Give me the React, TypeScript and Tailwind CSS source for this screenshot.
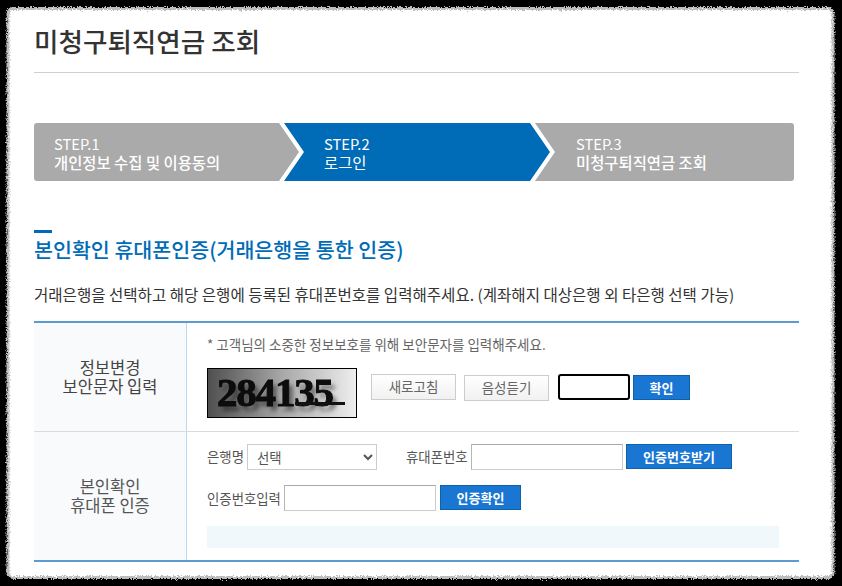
import React from "react";

const font = { fontFamily: '"Noto Sans CJK KR", "Noto Sans", sans-serif' };

function RoughEdge() {
  return (
    <svg className="absolute left-0 top-0 pointer-events-none" width="842" height="586">
      <defs>
        <filter id="rough" x="-2%" y="-2%" width="104%" height="104%">
          <feTurbulence type="fractalNoise" baseFrequency="0.8" numOctaves="2" seed="4" />
          <feDisplacementMap in="SourceGraphic" scale="5" xChannelSelector="R" yChannelSelector="G" />
        </filter>
      </defs>
      <rect x="8" y="8.5" width="825" height="569" rx="5" fill="none" stroke="#bdbdbd" strokeWidth="3" filter="url(#rough)" />
    </svg>
  );
}

function Btn({ w, children }: { w: string; children: React.ReactNode }) {
  return (
    <button className={`${w} h-[25px] bg-[#1976d2] border border-[#0f62a8] text-white text-[13px] font-bold leading-none`}>
      {children}
    </button>
  );
}

function GrayBtn({ children }: { children: React.ReactNode }) {
  return (
    <button className="w-[85px] h-[26px] border border-[#cccccc] bg-gradient-to-b from-white to-[#f1f1f1] text-[#666] text-[13.5px] leading-none">
      {children}
    </button>
  );
}

const inputCls = "h-[26px] border border-[#cccccc] border-t-[#a9a9a9] border-l-[#b5b5b5] bg-white";

export default function App() {
  return (
    <div className="relative w-[842px] h-[586px] bg-black p-2 overflow-hidden" style={font}>
      <div className="h-[570px] w-[825px] bg-white rounded-[5px] pl-[26px] overflow-hidden">
        <div className="w-[765px]">
          <div className="h-[65px] border-b border-[#d0d0d0] pt-[14px]">
            <h1 className="text-[26.6px] leading-[38px] font-medium text-[#333]">미청구퇴직연금 조회</h1>
          </div>

          <div className="mt-[50px] w-[760px] h-[58px] bg-[#aaaaaa] rounded-[3px] flex text-white text-[15.4px] leading-[18px]">
            <div className="w-[245px] pl-5 pt-[12px]">
              <div className="text-[14.7px]">STEP.1</div>
              <div className="font-medium">개인정보 수집 및 이용동의</div>
            </div>
            <div className="w-[276px] h-full bg-white [clip-path:polygon(0_0,256px_0,276px_50%,256px_100%,0_100%,20px_50%)]">
              <div className="ml-[5px] w-[266px] h-full bg-[#006cb7] pl-10 pt-[12px] [clip-path:polygon(0_0,246px_0,266px_50%,246px_100%,0_100%,20px_50%)]">
                <div className="text-[14.7px]">STEP.2</div>
                <div>로그인</div>
              </div>
            </div>
            <div className="pl-[21px] pt-[12px]">
              <div className="text-[14.7px]">STEP.3</div>
              <div className="font-medium">미청구퇴직연금 조회</div>
            </div>
          </div>

          <div className="mt-[49px] w-[18px] h-[3px] bg-[#006cb7]" />
          <h2 className="mt-[1px] text-[20.6px] leading-[30px] font-medium text-[#006cb7]">본인확인 휴대폰인증(거래은행을 통한 인증)</h2>
          <p className="mt-[19px] text-[15.55px] leading-[22px] text-[#333]">
            거래은행을 선택하고 해당 은행에 등록된 휴대폰번호를 입력해주세요. (계좌해지 대상은행 외 타은행 선택 가능)
          </p>

          <div className="mt-[16px] border-t-2 border-b-2 border-[#5b9bd0]">
            <div className="flex h-[109px] border-b border-[#d5dde3]">
              <div className="w-[153px] shrink-0 bg-[#f9fafc] border-r border-[#bcd9ef] flex items-center justify-center text-center text-[16.5px] leading-[19px] text-[#444]">
                <div>정보변경<br />보안문자 입력</div>
              </div>
              <div className="pl-5">
                <p className="pt-[12px] text-[13.5px] leading-[18px] text-[#666] whitespace-nowrap">* 고객님의 소중한 정보보호를 위해 보안문자를 입력해주세요.</p>
                <div className="mt-[15px] flex items-start">
                  <div className="relative w-[150px] h-[50px] border border-black bg-gradient-to-r from-[#505050] via-[#a8a8a8] to-[#eeeeee] overflow-hidden">
                    <span
                      className="absolute left-[9px] top-[-2px] text-[41px] leading-[50px] font-bold text-[#0c0c0c] tracking-[-1.2px] blur-[0.4px] [-webkit-text-stroke:1px_#0c0c0c] [text-shadow:4px_5px_4px_rgba(0,0,0,0.45)]"
                      style={{ fontFamily: '"Liberation Serif", serif' }}
                    >
                      284135
                    </span>
                    <div className="absolute left-[87px] top-[33px] w-[50px] h-[3px] bg-[#111]" />
                  </div>
                  <div className="ml-[14px] mt-[6px] flex items-start">
                    <GrayBtn>새로고침</GrayBtn>
                    <div className="ml-2"><GrayBtn>음성듣기</GrayBtn></div>
                    <input className="ml-[9px] w-[72px] h-[26px] border-2 border-black rounded-[3px] bg-white" />
                    <div className="ml-[3px]"><Btn w="w-[57px]">확인</Btn></div>
                  </div>
                </div>
              </div>
            </div>
            <div className="flex h-[128px]">
              <div className="w-[153px] shrink-0 bg-[#f9fafc] border-r border-[#bcd9ef] flex items-center justify-center text-center text-[16.5px] leading-[19px] text-[#555]">
                <div>본인확인<br />휴대폰 인증</div>
              </div>
              <div className="pl-5 pt-3 text-[13.4px] text-[#555]">
                <div className="flex items-start h-[26px]">
                  <span className="w-[40px] leading-[24px]">은행명</span>
                  <select className="w-[130px] h-[26px] border border-[#cccccc] bg-white pl-[5px] text-[13.4px] text-[#555]" style={font}>
                    <option>선택</option>
                  </select>
                  <span className="ml-[29px] w-[65px] leading-[24px]">휴대폰번호</span>
                  <input className={`${inputCls} w-[152px]`} />
                  <div className="ml-[3px]"><Btn w="w-[106px]">인증번호받기</Btn></div>
                </div>
                <div className="mt-[15px] flex items-start h-[26px]">
                  <span className="w-[77px] leading-[26px]">인증번호입력</span>
                  <input className={`${inputCls} w-[152px]`} />
                  <div className="ml-1"><Btn w="w-[81px]">인증확인</Btn></div>
                </div>
                <div className="mt-[15px] w-[572px] h-[22px] bg-[#f0f8fc]" />
              </div>
            </div>
          </div>
        </div>
      </div>
      <RoughEdge />
    </div>
  );
}
